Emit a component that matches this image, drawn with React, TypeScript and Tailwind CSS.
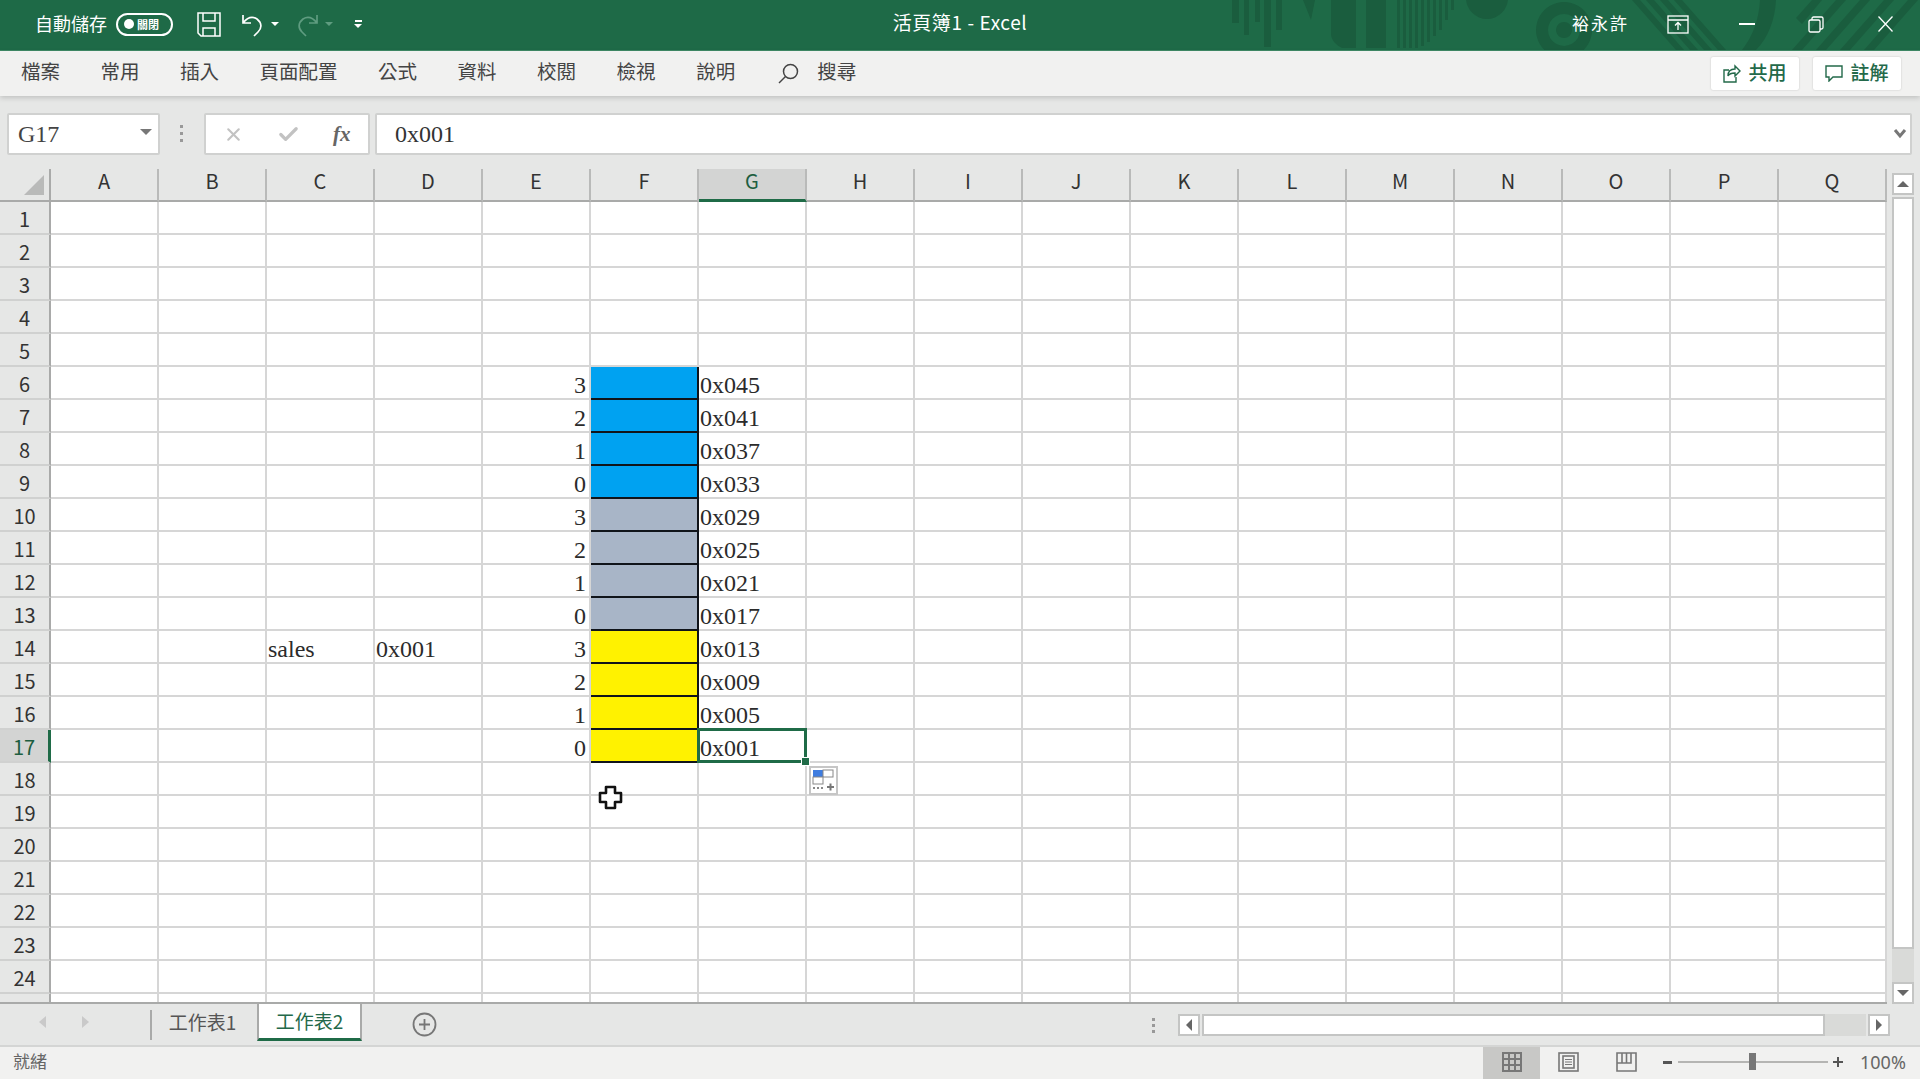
import { Check, X } from 'lucide-react';

const COLUMNS = ['A', 'B', 'C', 'D', 'E', 'F', 'G', 'H', 'I', 'J', 'K', 'L', 'M', 'N', 'O', 'P', 'Q'];
const ROW_NUMBERS = Array.from({ length: 25 }, (_, i) => i + 1);
const MENU_ITEMS = ['檔案', '常用', '插入', '頁面配置', '公式', '資料', '校閱', '檢視', '說明'];

const BLOCK_ROWS: Record<number, { slot: string; fill: string; address: string }> = {
  6: { slot: '3', fill: 'bg-[#00a2f1]', address: '0x045' },
  7: { slot: '2', fill: 'bg-[#00a2f1]', address: '0x041' },
  8: { slot: '1', fill: 'bg-[#00a2f1]', address: '0x037' },
  9: { slot: '0', fill: 'bg-[#00a2f1]', address: '0x033' },
  10: { slot: '3', fill: 'bg-[#a8b5c7]', address: '0x029' },
  11: { slot: '2', fill: 'bg-[#a8b5c7]', address: '0x025' },
  12: { slot: '1', fill: 'bg-[#a8b5c7]', address: '0x021' },
  13: { slot: '0', fill: 'bg-[#a8b5c7]', address: '0x017' },
  14: { slot: '3', fill: 'bg-[#fff200]', address: '0x013' },
  15: { slot: '2', fill: 'bg-[#fff200]', address: '0x009' },
  16: { slot: '1', fill: 'bg-[#fff200]', address: '0x005' },
  17: { slot: '0', fill: 'bg-[#fff200]', address: '0x001' },
};

const SERIF = "font-['Liberation_Serif',serif]";

// Decorative pattern behind the right end of the title bar
function TitlePattern() {
  return (
    <svg className="absolute right-0 top-0 h-[50px] w-[720px]" viewBox="0 0 720 50" fill="#1a5d3e">
      <rect x="32" y="0" width="7" height="23" />
      <rect x="44" y="0" width="5" height="35" />
      <rect x="55" y="0" width="5" height="22" />
      <rect x="64" y="0" width="7" height="47" />
      <rect x="76" y="0" width="6" height="30" />
      <path d="M103 0h12l-4 20z" />
      <path d="M131 0h25v48h-14c-6-3-11-8-11-14z" />
      <rect x="166" y="0" width="20" height="48" />
      <rect x="197" y="0" width="3" height="48" />
      <rect x="203" y="0" width="3" height="48" />
      <rect x="209" y="0" width="3" height="48" />
      <rect x="215" y="0" width="3" height="48" />
      <rect x="221" y="0" width="3" height="46" />
      <rect x="227" y="0" width="3" height="42" />
      <rect x="233" y="0" width="3" height="36" />
      <rect x="239" y="0" width="3" height="30" />
      <rect x="245" y="0" width="3" height="20" />
      <rect x="251" y="0" width="3" height="10" />
      <circle cx="287" cy="-2" r="21" />
      <path
        fillRule="evenodd"
        d="M364 2a28 28 0 1 0 0.01 0zM364 14a16 16 0 1 1-0.01 0zM364 22a8 8 0 1 0 0.01 0z"
      />
      <path d="M432 0h8l44 50h-8zM446 0h8l44 50h-8zM460 0h8l44 50h-8zM474 0h8l44 50h-8z" />
      <path d="M560 0h16c-1 20-8 38-20 50h-14c11-14 17-31 18-50z" />
      <path d="M612 0h10l-20 24-6-6zM636 0h10l-44 50h-10zM660 0h10l-44 50h-10zM684 0h10l-44 50h-10zM708 0h10l-44 50h-10z" />
    </svg>
  );
}

function TitleBar() {
  return (
    <div className="relative grid h-[51px] grid-cols-[1fr_auto_1fr] items-center overflow-hidden border-b border-[#3f8a66] bg-[#1e6a47] pb-[2px] text-white">
      <TitlePattern />
      <div className="relative flex items-center pl-[35px]">
        <span className="-mt-[3px] text-[18px] leading-none">自動儲存</span>
        <div className="ml-[9px] flex h-[23px] w-[57px] items-center rounded-full border-2 border-white pl-[6px]">
          <span className="h-[10px] w-[10px] rounded-full bg-white" />
          <span className="ml-[3px] text-[11px] leading-none font-bold">關閉</span>
        </div>
        <svg className="ml-[24px]" width="24" height="25" viewBox="0 0 24 25" fill="none" stroke="#fff" strokeWidth="1.5">
          <path d="M1 1h22v23H4l-3-3z" />
          <path d="M6 1v8h12V1M6 24v-8h12v8" />
        </svg>
        <svg className="ml-[20px]" width="24" height="25" viewBox="0 0 24 25" fill="none" stroke="#fff" strokeWidth="1.7">
          <path d="M2 3v8h8M2 11c4-5 9-7 14-4 5 4 5 9 1 13l-4 4" />
        </svg>
        <span className="ml-[6px] h-0 w-0 border-x-[4px] border-t-[4px] border-x-transparent border-t-white" />
        <svg className="ml-[16px]" width="24" height="25" viewBox="0 0 24 25" fill="none" stroke="#5f9c80" strokeWidth="1.7">
          <path d="M22 3v8h-8M22 11c-4-5-9-7-14-4-5 4-5 9-1 13l4 4" />
        </svg>
        <span className="ml-[6px] h-0 w-0 border-x-[4px] border-t-[4px] border-x-transparent border-t-[#5f9c80]" />
        <div className="ml-[21px] flex flex-col items-center gap-[2px]">
          <span className="h-[2px] w-[7px] bg-white" />
          <span className="h-0 w-0 border-x-[4px] border-t-[4px] border-x-transparent border-t-white" />
        </div>
      </div>
      <div className="relative -mt-[6px] text-[19px] leading-none tracking-[0.6px]">活頁簿1 - Excel</div>
      <div className="relative flex items-center justify-end">
        <span className="-mt-[3px] text-[17px] leading-none tracking-[2px]">裕永許</span>
        <svg className="ml-[38px]" width="22" height="19" viewBox="0 0 22 19" fill="none" stroke="#fff" strokeWidth="1.3">
          <rect x="1" y="1" width="20" height="17" />
          <path d="M1 5h20M11 15V8M8 10.5L11 7.5l3 3" />
        </svg>
        <span className="ml-[50px] h-[2px] w-[16px] bg-white" />
        <svg className="ml-[53px]" width="16" height="17" viewBox="0 0 16 17" fill="none" stroke="#fff" strokeWidth="1.3">
          <rect x="1" y="4" width="11" height="12" rx="1.5" />
          <path d="M4 4V2.5A1.5 1.5 0 0 1 5.5 1H13.5A1.5 1.5 0 0 1 15 2.5V11.5A1.5 1.5 0 0 1 13.5 13H12" />
        </svg>
        <svg className="ml-[54px] mr-[27px]" width="15" height="16" viewBox="0 0 15 16" fill="none" stroke="#fff" strokeWidth="1.3">
          <path d="M0.5 0.5L14.5 15.5M14.5 0.5L0.5 15.5" />
        </svg>
      </div>
    </div>
  );
}

function MenuBar() {
  return (
    <div className="relative z-10 flex h-[45px] items-center bg-[#f1f1f0] pl-[21px] pr-[19px] text-[#444] shadow-[0_2px_5px_rgba(0,0,0,0.16)]">
      <div className="-mt-[5px] flex items-center gap-[40.5px] text-[19.5px] leading-none">
        {MENU_ITEMS.map((item) => (
          <span key={item}>{item}</span>
        ))}
      </div>
      <svg className="ml-[41px]" width="24" height="24" viewBox="0 0 24 24" fill="none" stroke="#444" strokeWidth="1.5">
        <circle cx="14.5" cy="9.5" r="7" />
        <path d="M9.5 14.5L3 21" />
      </svg>
      <span className="-mt-[5px] ml-[17px] text-[19.5px] leading-none">搜尋</span>
      <div className="ml-auto flex gap-[14px] text-[19px] leading-none font-medium text-[#23694a]">
        <button className="flex h-[33px] w-[88px] items-center justify-center gap-[7px] rounded-[2px] bg-white pb-[4px] shadow-[0_0_2px_rgba(0,0,0,0.2)]">
          <svg className="mt-[4px]" width="18" height="19" viewBox="0 0 18 19" fill="none" stroke="#23694a" strokeWidth="1.4">
            <path d="M6 6H1v12h12v-5M5 12c0-5 3-7 7-7V2l5 5-5 5V9c-3 0-6 1-7 3z" />
          </svg>
          共用
        </button>
        <button className="flex h-[33px] w-[88px] items-center justify-center gap-[7px] rounded-[2px] bg-white pb-[4px] shadow-[0_0_2px_rgba(0,0,0,0.2)]">
          <svg className="mt-[4px]" width="18" height="17" viewBox="0 0 18 17" fill="none" stroke="#23694a" strokeWidth="1.4">
            <path d="M1 1h16v11H8l-4 4v-4H1z" />
          </svg>
          註解
        </button>
      </div>
    </div>
  );
}

function FormulaBar() {
  return (
    <div className="flex h-[73px] bg-[#e6e7e6] pt-[17px] pl-[7px] pr-[8px]">
      <div className={`flex h-[42px] w-[153px] items-center justify-between rounded-[2px] border-2 border-[#d0d1d0] bg-white pl-[9px] pr-[6px] text-[24px] text-[#444] ${SERIF}`}>
        G17
        <span className="mb-[5px] h-0 w-0 border-x-[6px] border-t-[6px] border-x-transparent border-t-[#777]" />
      </div>
      <div className="ml-[20px] flex h-[40px] flex-col justify-center gap-[4px]">
        <span className="h-[3px] w-[3px] bg-[#999]" />
        <span className="h-[3px] w-[3px] bg-[#999]" />
        <span className="h-[3px] w-[3px] bg-[#999]" />
      </div>
      <div className="ml-[21px] flex h-[42px] w-[166px] items-center rounded-[2px] border-2 border-[#d0d1d0] bg-white pl-[17px]">
        <X size={21} strokeWidth={2.4} className="text-[#c2c2c2]" />
        <Check size={23} strokeWidth={3.4} className="ml-[33px] text-[#c2c2c2]" />
        <span className={`ml-[33px] text-[21px] leading-none font-bold italic text-[#666] ${SERIF}`}>fx</span>
      </div>
      <div className={`ml-[5px] flex h-[42px] flex-1 items-center justify-between rounded-[2px] border-2 border-[#d0d1d0] bg-white pl-[18px] pr-[3px] text-[24px] text-[#333] ${SERIF}`}>
        0x001
        <svg width="14" height="10" viewBox="0 0 14 10" fill="none" stroke="#777" strokeWidth="3">
          <path d="M2 1l5 6 5-6" />
        </svg>
      </div>
    </div>
  );
}

function ColumnHeader() {
  return (
    <div className="flex h-[33px] shrink-0 bg-[#e6e7e6]">
      <div className="relative h-full w-[51px] shrink-0 border-r-2 border-b-2 border-[#a9aaa9]">
        <span className="absolute bottom-[5px] right-[5px] h-0 w-0 border-b-[20px] border-l-[20px] border-b-[#b9bab9] border-l-transparent" />
      </div>
      {COLUMNS.map((col) => (
        <div
          key={col}
          className={
            col === 'G'
              ? 'flex w-[108px] shrink-0 items-center justify-center border-r-2 border-b-[3px] border-r-[#b9bab9] border-b-[#1f6b47] bg-[#d3d4d3] pb-[6px] text-[20px] leading-none text-[#1d5e40]'
              : 'flex w-[108px] shrink-0 items-center justify-center border-r-2 border-b-2 border-r-[#b9bab9] border-b-[#a9aaa9] pb-[7px] text-[20px] leading-none text-[#333]'
          }
        >
          {col}
        </div>
      ))}
    </div>
  );
}

function SheetRow({ row }: { row: number }) {
  const block = BLOCK_ROWS[row];
  const selected = row === 17;

  return (
    <div className="flex h-[33px] shrink-0">
      <div
        className={
          selected
            ? 'flex w-[51px] shrink-0 items-center justify-center border-r-[3px] border-b-2 border-r-[#1f6b47] border-b-[#d0d1d0] bg-[#d3d4d3] pt-[2px] text-[20px] leading-none text-[#1d5e40]'
            : 'flex w-[51px] shrink-0 items-center justify-center border-r-2 border-b-2 border-r-[#a9aaa9] border-b-[#d0d1d0] bg-[#e6e7e6] pt-[2px] text-[20px] leading-none text-[#333]'
        }
      >
        {row < 25 ? row : ''}
      </div>
      {COLUMNS.map((col) => {
        if (block && col === 'F') {
          return (
            <div
              key={col}
              className={`w-[108px] shrink-0 border-r-2 border-b-2 border-[#10141a] shadow-[-2px_0_0_#10141a,0_-2px_0_#10141a] ${block.fill}`}
            />
          );
        }

        let text = '';
        let align = 'justify-start pl-[1px]';
        if (block && col === 'E') {
          text = block.slot;
          align = 'justify-end pr-[3px]';
        } else if (block && col === 'G') {
          text = block.address;
        } else if (row === 14 && col === 'C') {
          text = 'sales';
        } else if (row === 14 && col === 'D') {
          text = '0x001';
        }
        const active = selected && col === 'G';

        return (
          <div
            key={col}
            className={`relative flex w-[108px] shrink-0 items-center border-r-2 border-b-2 border-[#d6d6d6] pt-[5px] text-[24px] leading-none text-[#2b2b2b] ${active ? 'z-10' : ''} ${align} ${SERIF}`}
          >
            {text}
            {active && (
              <>
                <span className="absolute -left-[2px] -top-[2px] h-[35px] w-[110px] border-[3px] border-[#1f6b47]" />
                <span className="absolute -bottom-[5px] -right-[5px] h-[9px] w-[9px] border border-white bg-[#1f6b47]" />
              </>
            )}
          </div>
        );
      })}
    </div>
  );
}

function Sheet() {
  return (
    <div className="relative h-[835px] w-[1887px] shrink-0 overflow-hidden border-b-2 border-[#a9aaa9] bg-white">
      <div className="flex h-full flex-col border-r-2 border-[#a9aaa9]">
        <ColumnHeader />
        {ROW_NUMBERS.map((row) => (
          <SheetRow key={row} row={row} />
        ))}
      </div>
      {/* quick-analysis tag next to the selection */}
      <div className="absolute left-[809px] top-[597px] z-20 flex h-[29px] w-[29px] items-center justify-center border-2 border-[#c6c6c6] bg-white">
        <svg width="23" height="23" viewBox="0 0 23 23" fill="none">
          <rect x="1" y="1" width="10" height="7" fill="#3f7de0" />
          <rect x="11" y="1" width="10" height="7" fill="#fff" stroke="#888" />
          <rect x="1" y="8" width="10" height="7" fill="#fff" stroke="#888" />
          <path d="M1 19h12" stroke="#888" strokeDasharray="2 2" strokeWidth="2" />
          <path d="M15 18h7M18.5 14.5v7" stroke="#777" strokeWidth="2" />
        </svg>
      </div>
      {/* mouse pointer */}
      <svg className="absolute left-[598px] top-[616px] z-20" width="25" height="25" viewBox="0 0 25 25" fill="#fff" stroke="#111" strokeWidth="2.6">
        <path d="M8 2h9v6h6v9h-6v6H8v-6H2V8h6z" strokeLinejoin="round" />
      </svg>
    </div>
  );
}

function ArrowButton({ dir }: { dir: 'up' | 'down' | 'left' | 'right' }) {
  const arrow = {
    up: 'border-x-[6px] border-b-[6px] border-x-transparent border-b-[#666]',
    down: 'border-x-[6px] border-t-[6px] border-x-transparent border-t-[#666]',
    left: 'border-y-[6px] border-r-[6px] border-y-transparent border-r-[#666]',
    right: 'border-y-[6px] border-l-[6px] border-y-transparent border-l-[#666]',
  }[dir];
  return (
    <div className="flex h-[22px] w-[22px] shrink-0 items-center justify-center border-2 border-[#c4c5c4] bg-white">
      <span className={`h-0 w-0 ${arrow}`} />
    </div>
  );
}

function VerticalScrollbar() {
  return (
    <div className="flex h-[835px] flex-1 flex-col bg-[#e6e7e6] pl-[5px] pt-[4px]">
      <ArrowButton dir="up" />
      <div className="mt-[2px] h-[752px] w-[22px] border-2 border-[#c4c5c4] bg-white" />
      <div className="h-[33px] w-[22px] bg-[#d9dad8]" />
      <ArrowButton dir="down" />
    </div>
  );
}

function TabBar() {
  return (
    <div className="flex h-[41px] items-start bg-[#e6e7e6]">
      <div className="flex h-[36px] w-[150px] shrink-0 items-center pl-[39px]">
        <span className="h-0 w-0 border-y-[6px] border-r-[7px] border-y-transparent border-r-[#c9c9c9]" />
        <span className="ml-[36px] h-0 w-0 border-y-[6px] border-l-[7px] border-y-transparent border-l-[#c9c9c9]" />
      </div>
      <div className="mt-[6px] flex h-[30px] w-[107px] shrink-0 items-center justify-center border-l-2 border-[#a9aaa9] pr-[4px] pb-[7px] text-[19px] leading-none text-[#555]">
        工作表1
      </div>
      <div className="-mt-[2px] flex h-[39px] w-[105px] shrink-0 items-center justify-center border-x-2 border-b-[3px] border-x-[#a9aaa9] border-b-[#1f6b47] bg-white text-[19px] leading-none text-[#23694a]">
        工作表2
      </div>
      <svg className="ml-[50px] mt-[8px]" width="25" height="25" viewBox="0 0 25 25" fill="none" stroke="#777" strokeWidth="1.8">
        <circle cx="12.5" cy="12.5" r="11" />
        <path d="M12.5 7v11M7 12.5h11" />
      </svg>
      <div className="ml-[715px] mt-[14px] flex flex-col gap-[3px]">
        <span className="h-[3px] w-[3px] bg-[#999]" />
        <span className="h-[3px] w-[3px] bg-[#999]" />
        <span className="h-[3px] w-[3px] bg-[#999]" />
      </div>
      <div className="ml-[23px] mt-[10px] flex items-start">
        <ArrowButton dir="left" />
        <div className="ml-[2px] h-[22px] w-[623px] border-2 border-[#c4c5c4] bg-white" />
        <div className="h-[22px] w-[41px] bg-[#d9dad8]" />
        <div className="ml-[2px]">
          <ArrowButton dir="right" />
        </div>
      </div>
    </div>
  );
}

function StatusBar() {
  return (
    <div className="flex h-[34px] items-center border-t-2 border-[#d4d5d4] bg-[#f1f1f0] pl-[13px] text-[#666]">
      <span className="-mt-[5px] text-[17px] leading-none">就緒</span>
      <div className="ml-auto flex h-full items-center">
        <div className="flex h-full w-[57px] items-center justify-center bg-[#c8c8c6]">
          <svg className="-mt-[2px]" width="20" height="20" viewBox="0 0 20 20" fill="#777">
            <path d="M0 0h20v20H0zM2 2v4h4V2zm6 0v4h4V2zm6 0v4h4V2zM2 8v4h4V8zm6 0v4h4V8zm6 0v4h4V8zM2 14v4h4v-4zm6 0v4h4v-4zm6 0v4h4v-4z" fillRule="evenodd" />
          </svg>
        </div>
        <svg className="-mt-[2px] ml-[18px]" width="21" height="20" viewBox="0 0 21 20" fill="none" stroke="#777" strokeWidth="1.6">
          <rect x="1" y="1" width="19" height="18" />
          <rect x="5" y="4" width="11" height="12" />
          <path d="M7 7.5h7M7 10h7M7 12.5h7" strokeWidth="1.2" />
        </svg>
        <svg className="-mt-[2px] ml-[37px]" width="21" height="20" viewBox="0 0 21 20" fill="none" stroke="#777" strokeWidth="1.6">
          <path d="M1 1h19v18H1zM6 1v10h9V1M10.5 1v10M1 11h5" />
        </svg>
        <span className="-mt-[2px] ml-[26px] h-[3px] w-[9px] bg-[#555]" />
        <div className="relative -mt-[2px] ml-[6px] h-[2px] w-[150px] bg-[#b5b5b3]">
          <span className="absolute -top-[8px] left-[71px] h-[17px] w-[7px] bg-[#777]" />
        </div>
        <span className="relative -mt-[2px] ml-[5px] h-[10px] w-[10px]">
          <span className="absolute left-0 top-[4px] h-[2px] w-[10px] bg-[#555]" />
          <span className="absolute left-[4px] top-0 h-[10px] w-[2px] bg-[#555]" />
        </span>
        <span className="-mt-[3px] ml-[17px] mr-[11px] w-[49px] text-[18px] leading-none text-[#666] font-['Noto_Sans',sans-serif]">100%</span>
      </div>
    </div>
  );
}

export default function App() {
  return (
    <div className="h-[1080px] w-[1920px] overflow-hidden bg-white font-['Noto_Sans_CJK_TC','Noto_Sans',sans-serif]">
      <TitleBar />
      <MenuBar />
      <FormulaBar />
      <div className="flex">
        <Sheet />
        <VerticalScrollbar />
      </div>
      <TabBar />
      <StatusBar />
    </div>
  );
}
